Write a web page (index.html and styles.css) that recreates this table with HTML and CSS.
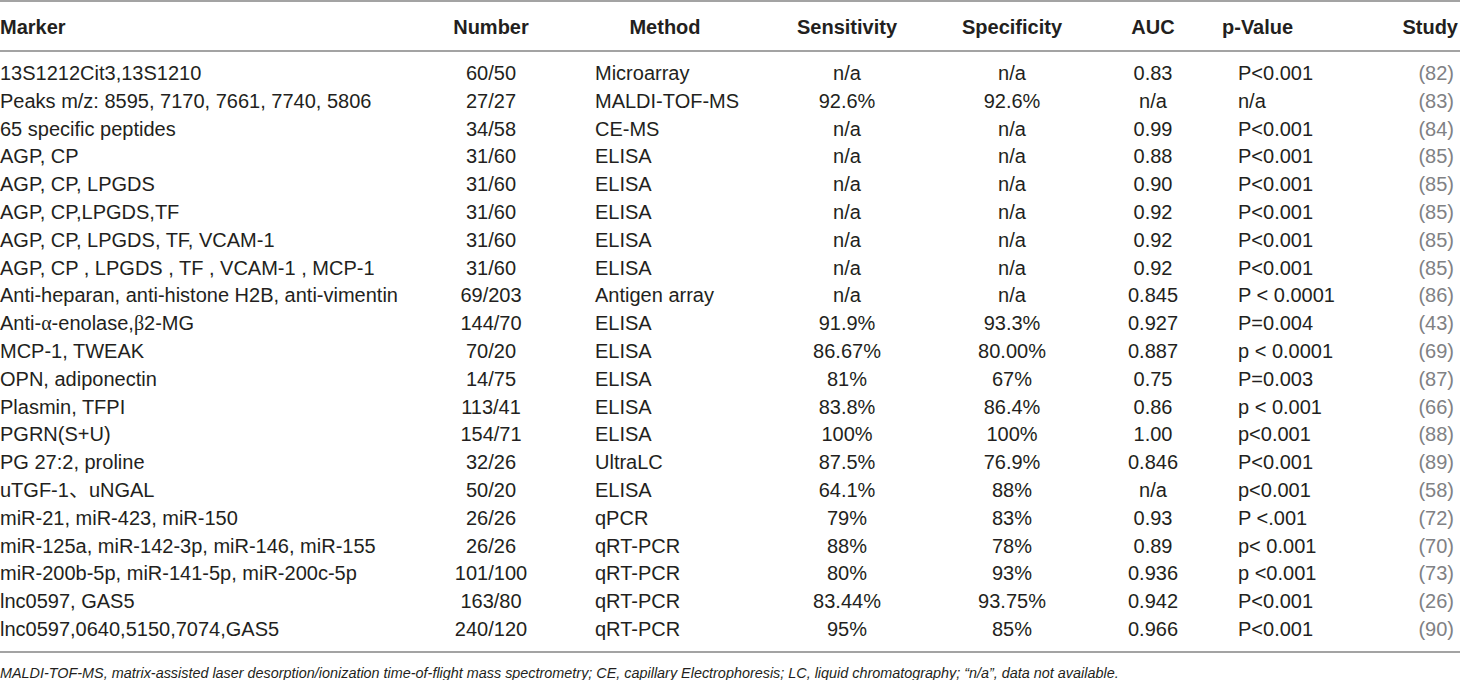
FILE: index.html
```html
<!DOCTYPE html>
<html lang="en">
<head>
<meta charset="utf-8">
<title>Biomarker table</title>
<link rel="stylesheet" href="styles.css">
</head>
<body>
<div class="wrap">
<table class="tbl">
  <thead>
    <tr>
      <th class="c-marker">Marker</th>
      <th class="c-num">Number</th>
      <th class="c-method">Method</th>
      <th class="c-sens">Sensitivity</th>
      <th class="c-spec">Specificity</th>
      <th class="c-auc">AUC</th>
      <th class="c-p">p-Value</th>
      <th class="c-study">Study</th>
    </tr>
  </thead>
  <tbody>
    <tr><td class="c-marker">13S1212Cit3,13S1210</td><td class="c-num">60/50</td><td class="c-method">Microarray</td><td class="c-sens">n/a</td><td class="c-spec">n/a</td><td class="c-auc">0.83</td><td class="c-p">P&lt;0.001</td><td class="c-study">(82)</td></tr>
    <tr><td class="c-marker">Peaks m/z: 8595, 7170, 7661, 7740, 5806</td><td class="c-num">27/27</td><td class="c-method">MALDI-TOF-MS</td><td class="c-sens">92.6%</td><td class="c-spec">92.6%</td><td class="c-auc">n/a</td><td class="c-p">n/a</td><td class="c-study">(83)</td></tr>
    <tr><td class="c-marker">65 specific peptides</td><td class="c-num">34/58</td><td class="c-method">CE-MS</td><td class="c-sens">n/a</td><td class="c-spec">n/a</td><td class="c-auc">0.99</td><td class="c-p">P&lt;0.001</td><td class="c-study">(84)</td></tr>
    <tr><td class="c-marker">AGP, CP</td><td class="c-num">31/60</td><td class="c-method">ELISA</td><td class="c-sens">n/a</td><td class="c-spec">n/a</td><td class="c-auc">0.88</td><td class="c-p">P&lt;0.001</td><td class="c-study">(85)</td></tr>
    <tr><td class="c-marker">AGP, CP, LPGDS</td><td class="c-num">31/60</td><td class="c-method">ELISA</td><td class="c-sens">n/a</td><td class="c-spec">n/a</td><td class="c-auc">0.90</td><td class="c-p">P&lt;0.001</td><td class="c-study">(85)</td></tr>
    <tr><td class="c-marker">AGP, CP,LPGDS,TF</td><td class="c-num">31/60</td><td class="c-method">ELISA</td><td class="c-sens">n/a</td><td class="c-spec">n/a</td><td class="c-auc">0.92</td><td class="c-p">P&lt;0.001</td><td class="c-study">(85)</td></tr>
    <tr><td class="c-marker">AGP, CP, LPGDS, TF, VCAM-1</td><td class="c-num">31/60</td><td class="c-method">ELISA</td><td class="c-sens">n/a</td><td class="c-spec">n/a</td><td class="c-auc">0.92</td><td class="c-p">P&lt;0.001</td><td class="c-study">(85)</td></tr>
    <tr><td class="c-marker">AGP, CP , LPGDS , TF , VCAM-1 , MCP-1</td><td class="c-num">31/60</td><td class="c-method">ELISA</td><td class="c-sens">n/a</td><td class="c-spec">n/a</td><td class="c-auc">0.92</td><td class="c-p">P&lt;0.001</td><td class="c-study">(85)</td></tr>
    <tr><td class="c-marker">Anti-heparan, anti-histone H2B, anti-vimentin</td><td class="c-num">69/203</td><td class="c-method">Antigen array</td><td class="c-sens">n/a</td><td class="c-spec">n/a</td><td class="c-auc">0.845</td><td class="c-p">P &lt; 0.0001</td><td class="c-study">(86)</td></tr>
    <tr><td class="c-marker">Anti-<span class="greek">α</span>-enolase,<span class="greek">β</span>2-MG</td><td class="c-num">144/70</td><td class="c-method">ELISA</td><td class="c-sens">91.9%</td><td class="c-spec">93.3%</td><td class="c-auc">0.927</td><td class="c-p">P=0.004</td><td class="c-study">(43)</td></tr>
    <tr><td class="c-marker">MCP-1, TWEAK</td><td class="c-num">70/20</td><td class="c-method">ELISA</td><td class="c-sens">86.67%</td><td class="c-spec">80.00%</td><td class="c-auc">0.887</td><td class="c-p">p &lt; 0.0001</td><td class="c-study">(69)</td></tr>
    <tr><td class="c-marker">OPN, adiponectin</td><td class="c-num">14/75</td><td class="c-method">ELISA</td><td class="c-sens">81%</td><td class="c-spec">67%</td><td class="c-auc">0.75</td><td class="c-p">P=0.003</td><td class="c-study">(87)</td></tr>
    <tr><td class="c-marker">Plasmin, TFPI</td><td class="c-num">113/41</td><td class="c-method">ELISA</td><td class="c-sens">83.8%</td><td class="c-spec">86.4%</td><td class="c-auc">0.86</td><td class="c-p">p &lt; 0.001</td><td class="c-study">(66)</td></tr>
    <tr><td class="c-marker">PGRN(S+U)</td><td class="c-num">154/71</td><td class="c-method">ELISA</td><td class="c-sens">100%</td><td class="c-spec">100%</td><td class="c-auc">1.00</td><td class="c-p">p&lt;0.001</td><td class="c-study">(88)</td></tr>
    <tr><td class="c-marker">PG 27:2, proline</td><td class="c-num">32/26</td><td class="c-method">UltraLC</td><td class="c-sens">87.5%</td><td class="c-spec">76.9%</td><td class="c-auc">0.846</td><td class="c-p">P&lt;0.001</td><td class="c-study">(89)</td></tr>
    <tr><td class="c-marker">uTGF-1、uNGAL</td><td class="c-num">50/20</td><td class="c-method">ELISA</td><td class="c-sens">64.1%</td><td class="c-spec">88%</td><td class="c-auc">n/a</td><td class="c-p">p&lt;0.001</td><td class="c-study">(58)</td></tr>
    <tr><td class="c-marker">miR-21, miR-423, miR-150</td><td class="c-num">26/26</td><td class="c-method">qPCR</td><td class="c-sens">79%</td><td class="c-spec">83%</td><td class="c-auc">0.93</td><td class="c-p">P &lt;.001</td><td class="c-study">(72)</td></tr>
    <tr><td class="c-marker">miR-125a, miR-142-3p, miR-146, miR-155</td><td class="c-num">26/26</td><td class="c-method">qRT-PCR</td><td class="c-sens">88%</td><td class="c-spec">78%</td><td class="c-auc">0.89</td><td class="c-p">p&lt; 0.001</td><td class="c-study">(70)</td></tr>
    <tr><td class="c-marker">miR-200b-5p, miR-141-5p, miR-200c-5p</td><td class="c-num">101/100</td><td class="c-method">qRT-PCR</td><td class="c-sens">80%</td><td class="c-spec">93%</td><td class="c-auc">0.936</td><td class="c-p">p &lt;0.001</td><td class="c-study">(73)</td></tr>
    <tr><td class="c-marker">lnc0597, GAS5</td><td class="c-num">163/80</td><td class="c-method">qRT-PCR</td><td class="c-sens">83.44%</td><td class="c-spec">93.75%</td><td class="c-auc">0.942</td><td class="c-p">P&lt;0.001</td><td class="c-study">(26)</td></tr>
    <tr><td class="c-marker">lnc0597,0640,5150,7074,GAS5</td><td class="c-num">240/120</td><td class="c-method">qRT-PCR</td><td class="c-sens">95%</td><td class="c-spec">85%</td><td class="c-auc">0.966</td><td class="c-p">P&lt;0.001</td><td class="c-study">(90)</td></tr>
  </tbody>
</table>
<p class="note">MALDI-TOF-MS, matrix-assisted laser desorption/ionization time-of-flight mass spectrometry; CE, capillary Electrophoresis; LC, liquid chromatography; “n/a”, data not available.</p>
</div>
</body>
</html>
```

FILE: styles.css
```css
html, body {
  margin: 0;
  padding: 0;
  overflow: hidden;
  background: #ffffff;
}

.wrap {
  width: 1460px;
  font-family: "Liberation Sans", Arial, "Noto Sans CJK SC", sans-serif;
  color: #231f20;
}

.tbl {
  width: 1460px;
  border-collapse: collapse;
  table-layout: fixed;
  border-top: 2px solid #a3a3a3;
  border-bottom: 2px solid #a3a3a3;
  font-size: 20px;
}

.tbl th {
  font-weight: bold;
  line-height: 24px;
  padding-top: 13px;
  padding-bottom: 11px;
  border-bottom: 2px solid #a3a3a3;
  text-align: center;
  white-space: nowrap;
}

.tbl td {
  line-height: 27.8px;
  padding-top: 0;
  padding-bottom: 0;
  white-space: nowrap;
}

.tbl tbody tr:first-child td { padding-top: 8px; }
.tbl tbody tr:last-child td { padding-bottom: 7px; }

.c-marker { width: 420px; text-align: left; padding-left: 0; padding-right: 0; }
.tbl th.c-marker { text-align: left; }
.c-num { width: 142px; text-align: center; padding-left: 0; padding-right: 0; }
.c-method { width: 140px; padding-left: 33px; padding-right: 33px; text-align: left; }
.c-sens { width: 158px; text-align: center; padding-left: 0; padding-right: 0; }
.c-spec { width: 172px; text-align: center; padding-left: 0; padding-right: 0; }
.c-auc { width: 110px; text-align: center; padding-left: 0; padding-right: 0; }
.c-p { width: 120px; padding-left: 30px; padding-right: 0; text-align: left; }
.tbl th.c-p { text-align: left; padding-left: 14px; width: 136px; }
.c-study { width: 100px; text-align: right; padding-left: 0; padding-right: 6px; }
.tbl th.c-study { text-align: right; padding-right: 2px; }

td.c-study { color: #808184; }

.greek {
  font-family: "Liberation Serif", "DejaVu Serif", serif;
}

.note {
  margin: 0;
  padding-top: 12px;
  font-size: 14.4px;
  line-height: 17px;
  font-style: italic;
  color: #231f20;
  white-space: nowrap;
}
```
